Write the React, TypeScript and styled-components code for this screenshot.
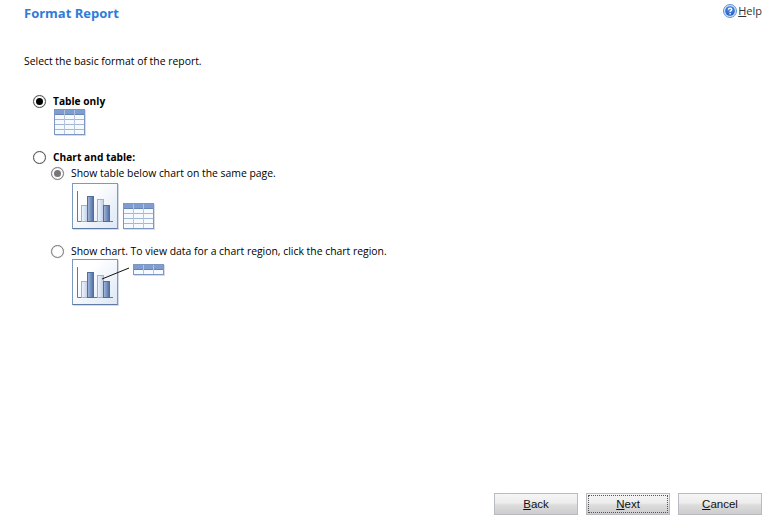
import React from 'react'
import styled, { createGlobalStyle } from 'styled-components'

const GlobalStyle = createGlobalStyle`
  html, body {
    margin: 0;
    padding: 0;
    background: #fff;
  }
`

const Page = styled.div`
  width: 781px;
  height: 520px;
  display: flex;
  flex-direction: column;
  box-sizing: border-box;
  padding: 0 19px 5px 24px;
  overflow: hidden;
  font-family: 'Open Sans', 'Noto Sans', sans-serif;
  font-size: 10.4px;
  color: #000;
`

const Header = styled.div`
  height: 26px;
  display: flex;
  justify-content: space-between;
  align-items: center;
`

const Title = styled.h1`
  margin: 0;
  font-size: 13px;
  font-weight: 700;
  color: #2f7bd8;
`

const HelpLink = styled.div`
  display: flex;
  align-items: center;
  gap: 1px;
  font-size: 11px;
  color: #333;
  margin-top: -5px;
  & u {
    text-underline-offset: 1px;
  }
`

const Intro = styled.p`
  margin: 28px 0 0;
  height: 15px;
  line-height: 15px;
`

const Options = styled.div`
  flex: 1;
  display: flex;
  flex-direction: column;
  margin: 24px 0 0 9px;
`

const OptionRow = styled.div<{ $indent?: boolean; $top?: number }>`
  display: flex;
  align-items: center;
  gap: 7px;
  height: 16px;
  margin-left: ${p => (p.$indent ? 18 : 0)}px;
  margin-top: ${p => p.$top ?? 0}px;
`

const Radio = styled.span<{ $checked?: boolean; $muted?: boolean }>`
  width: 13px;
  height: 13px;
  box-sizing: border-box;
  border-radius: 50%;
  background: #fff;
  border: 1px solid ${p => (p.$muted ? '#808080' : '#555')};
  box-shadow: inset 0 0 1px #aaa, 0 0 1px #bbb;
  display: flex;
  align-items: center;
  justify-content: center;
  &::after {
    content: '';
    display: ${p => (p.$checked ? 'block' : 'none')};
    width: 7px;
    height: 7px;
    border-radius: 50%;
    background: ${p => (p.$muted ? '#777' : '#000')};
  }
`

const Label = styled.span<{ $bold?: boolean }>`
  font-weight: ${p => (p.$bold ? 700 : 400)};
  font-size: ${p => (p.$bold ? '10.2px' : 'inherit')};
  white-space: nowrap;
`

const Preview = styled.div<{ $left: number; $top: number; $height: number }>`
  display: flex;
  margin-left: ${p => p.$left}px;
  margin-top: ${p => p.$top}px;
  height: ${p => p.$height}px;
`

const ChartFrame = styled.div`
  width: 46px;
  height: 46px;
  box-sizing: border-box;
  border: 1px solid #7f98bd;
  border-bottom-color: #5f7ba5;
  background: linear-gradient(135deg, #ffffff 30%, #dde7f5);
  box-shadow: 1px 1px 0 #d5dbe4;
`

const SideArt = styled.div<{ $top: number; $left: number }>`
  margin-top: ${p => p.$top}px;
  margin-left: ${p => p.$left}px;
  line-height: 0;
`

const Footer = styled.div`
  display: flex;
  justify-content: flex-end;
  gap: 8px;
`

const Button = styled.div<{ $focused?: boolean }>`
  position: relative;
  width: 84px;
  height: 22px;
  box-sizing: border-box;
  border: 1px solid #b8bcc0;
  background: linear-gradient(#f6f6f6 0%, #ececec 45%, #dcdcdc 55%, #cdcdcd 100%);
  display: flex;
  align-items: center;
  justify-content: center;
  font-family: 'Liberation Sans', Arial, sans-serif;
  font-size: 11.5px;
  color: #111;
  ${p =>
    p.$focused &&
    `
    &::after {
      content: '';
      position: absolute;
      inset: 1px;
      border: 1px dotted #555;
    }
  `}
`

const HelpIcon = () => (
  <svg width="14" height="14" viewBox="0 0 14 14">
    <defs>
      <radialGradient id="helpFill" cx="50%" cy="35%" r="70%">
        <stop offset="0%" stopColor="#5a9af0" />
        <stop offset="100%" stopColor="#1c52b8" />
      </radialGradient>
    </defs>
    <circle cx="7" cy="7" r="6.5" fill="#cfe0f7" stroke="#5f93dc" />
    <circle cx="7" cy="7" r="4.8" fill="url(#helpFill)" />
    <path d="M5.3 5.6c.1-1 .8-1.5 1.8-1.5s1.7.6 1.7 1.4c0 1.2-1.7 1.2-1.7 2.4" fill="none" stroke="#fff" strokeWidth="1.3" />
    <rect x="6.4" y="9" width="1.4" height="1.4" fill="#fff" />
  </svg>
)

const TableArt = ({ width, rows }: { width: number; rows: number }) => {
  const rowH = 5
  const height = 6 + rows * rowH
  const colW = (width - 1) / 3
  return (
    <svg width={width + 1} height={height + 1} viewBox={`0 0 ${width + 1} ${height + 1}`} style={{ display: 'block' }}>
      <rect x="1" y="1" width={width} height={height} fill="#d9dde3" />
      <rect x="0.5" y="0.5" width={width - 1} height={height - 1} fill="#f6f9fd" stroke="#7d97c0" />
      <rect x="1" y="1" width={width - 2} height="4" fill="#7f9dd0" />
      {Array.from({ length: rows }).map((_, i) => (
        <line key={i} x1="1" x2={width - 1} y1={5.5 + i * rowH} y2={5.5 + i * rowH} stroke={i === 0 ? '#6684b8' : '#a3b6d3'} />
      ))}
      {[1, 2].map(i => (
        <line key={i} x1={0.5 + Math.round(colW * i)} x2={0.5 + Math.round(colW * i)} y1="1" y2={height - 1} stroke="#b4c4dc" />
      ))}
    </svg>
  )
}

const Bar = ({ x, y, light }: { x: number; y: number; light?: boolean }) => (
  <rect x={x} y={y} width="6" height={37.5 - y} fill={light ? 'url(#barLight)' : 'url(#barDark)'} stroke={light ? '#9db2d4' : '#4f6f9f'} strokeWidth="1" />
)

const ChartArt = ({ pointer }: { pointer?: boolean }) => (
  <ChartFrame>
    <svg width="44" height="44" viewBox="0 0 44 44" style={{ display: 'block', overflow: 'visible' }}>
      <defs>
        <linearGradient id="barDark" x1="0" x2="1" y1="0" y2="0">
          <stop offset="0%" stopColor="#a9bcdc" />
          <stop offset="100%" stopColor="#4a6ca3" />
        </linearGradient>
        <linearGradient id="barLight" x1="0" x2="1" y1="0" y2="0">
          <stop offset="0%" stopColor="#f2f6fb" />
          <stop offset="100%" stopColor="#c0d0e8" />
        </linearGradient>
      </defs>
      <path d="M4.5 7V37.5H40" fill="none" stroke="#5b78a6" />
      <Bar x={8.5} y={21.5} light />
      <Bar x={14.5} y={12.5} />
      <Bar x={24.5} y={15.5} light />
      <Bar x={30.5} y={21.5} />
      {pointer && <line x1="29" y1="19" x2="56" y2="8" stroke="#111" strokeWidth="1" />}
    </svg>
  </ChartFrame>
)

export default function App() {
  return (
    <Page>
      <GlobalStyle />
      <Header>
        <Title>Format Report</Title>
        <HelpLink>
          <HelpIcon />
          <span>
            <u>H</u>elp
          </span>
        </HelpLink>
      </Header>
      <Intro>Select the basic format of the report.</Intro>
      <Options>
        <OptionRow>
          <Radio $checked />
          <Label $bold>Table only</Label>
        </OptionRow>
        <Preview $left={21} $top={0} $height={26}>
          <TableArt width={31} rows={4} />
        </Preview>
        <OptionRow $top={14}>
          <Radio />
          <Label $bold>Chart and table:</Label>
        </OptionRow>
        <OptionRow $indent $top={0}>
          <Radio $checked $muted />
          <Label>Show table below chart on the same page.</Label>
        </OptionRow>
        <Preview $left={39} $top={2} $height={46}>
          <ChartArt />
          <SideArt $top={20} $left={5}>
            <TableArt width={31} rows={4} />
          </SideArt>
        </Preview>
        <OptionRow $indent $top={14}>
          <Radio $muted />
          <Label>Show chart. To view data for a chart region, click the chart region.</Label>
        </OptionRow>
        <Preview $left={39} $top={0} $height={46}>
          <ChartArt pointer />
          <SideArt $top={5} $left={15}>
            <TableArt width={31} rows={1} />
          </SideArt>
        </Preview>
      </Options>
      <Footer>
        <Button>
          <span>
            <u>B</u>ack
          </span>
        </Button>
        <Button $focused>
          <span>
            <u>N</u>ext
          </span>
        </Button>
        <Button>
          <span>
            <u>C</u>ancel
          </span>
        </Button>
      </Footer>
    </Page>
  )
}
